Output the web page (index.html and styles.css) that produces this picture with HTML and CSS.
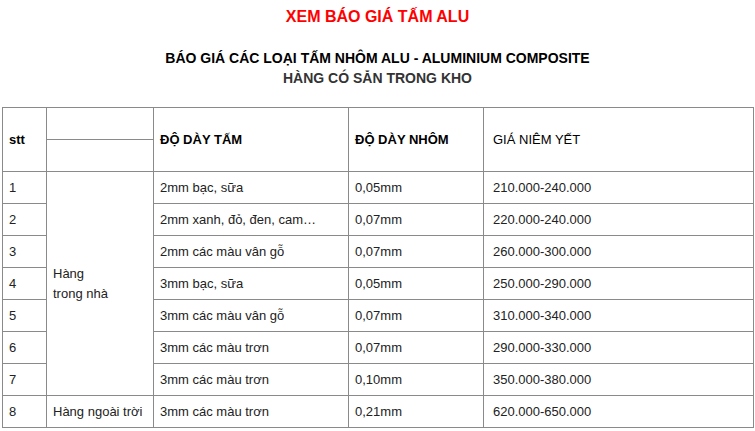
FILE: index.html
```html
<!DOCTYPE html>
<html lang="vi">
<head>
<meta charset="utf-8">
<title>Báo giá tấm Alu</title>
<link rel="stylesheet" href="styles.css">
</head>
<body>
<div class="page">
  <h1 class="title">XEM BÁO GIÁ TẤM ALU</h1>
  <div class="subtitle">
    <div class="sub-main">BÁO GIÁ CÁC LOẠI TẤM NHÔM ALU - ALUMINIUM COMPOSITE</div>
    <div class="sub-second">HÀNG CÓ SẴN TRONG KHO</div>
  </div>
  <table class="price">
    <colgroup>
      <col class="c1"><col class="c2"><col class="c3"><col class="c4"><col class="c5">
    </colgroup>
    <thead>
      <tr class="hrow">
        <th rowspan="2" class="b">stt</th>
        <th class="empty"></th>
        <th rowspan="2" class="b">ĐỘ DÀY TẤM</th>
        <th rowspan="2" class="b">ĐỘ DÀY NHÔM</th>
        <th rowspan="2" class="r price-col">GIÁ NIÊM YẾT</th>
      </tr>
      <tr class="hrow">
        <th class="empty"></th>
      </tr>
    </thead>
    <tbody>
      <tr><td>1</td><td rowspan="7" class="group">Hàng<br>trong nhà</td><td>2mm bạc, sữa</td><td>0,05mm</td><td class="price-col">210.000-240.000</td></tr>
      <tr><td>2</td><td>2mm xanh, đỏ, đen, cam…</td><td>0,07mm</td><td class="price-col">220.000-240.000</td></tr>
      <tr><td>3</td><td>2mm các màu vân gỗ</td><td>0,07mm</td><td class="price-col">260.000-300.000</td></tr>
      <tr><td>4</td><td>3mm bạc, sữa</td><td>0,05mm</td><td class="price-col">250.000-290.000</td></tr>
      <tr><td>5</td><td>3mm các màu vân gỗ</td><td>0,07mm</td><td class="price-col">310.000-340.000</td></tr>
      <tr><td>6</td><td>3mm các màu trơn</td><td>0,07mm</td><td class="price-col">290.000-330.000</td></tr>
      <tr><td>7</td><td>3mm các màu trơn</td><td>0,10mm</td><td class="price-col">350.000-380.000</td></tr>
      <tr><td>8</td><td>Hàng ngoài trời</td><td>3mm các màu trơn</td><td>0,21mm</td><td class="price-col">620.000-650.000</td></tr>
    </tbody>
  </table>
</div>
</body>
</html>
```
FILE: styles.css
```css
html, body {
  margin: 0;
  padding: 0;
  background: #ffffff;
}
body {
  font-family: "Liberation Sans", Arial, sans-serif;
  color: #222;
  overflow: hidden;
}
.page {
  width: 755px;
}
.title {
  margin: 0;
  padding-top: 7px;
  font-size: 16px;
  line-height: 20px;
  font-weight: bold;
  color: #ff0000;
  text-align: center;
}
.subtitle {
  margin-top: 21px;
  text-align: center;
  font-size: 14px;
  line-height: 20px;
  font-weight: bold;
}
.sub-main {
  color: #000;
}
.sub-second {
  color: #333;
}
.price {
  margin: 19px 0 0 2px;
  width: 751px;
  border-collapse: collapse;
  table-layout: fixed;
  border: 1px solid #333;
  font-size: 13px;
}
.c1 { width: 44px; }
.c2 { width: 107px; }
.c3 { width: 195px; }
.c4 { width: 135px; }
.c5 { width: 270px; }
.price th,
.price td {
  border: 1px solid #8a8a8a;
  padding: 0 6px;
  text-align: left;
  vertical-align: middle;
  line-height: 20px;
  color: #222;
}
.price thead th {
  color: #000;
}
.price th.b {
  font-weight: bold;
}
.price th.r {
  font-weight: normal;
}
.hrow {
  height: 32px;
}
.price tbody tr {
  height: 32px;
}
.price td {
  height: 31px;
}
.price .price-col {
  padding-left: 9px;
}
.price tr:first-child th:first-child,
.price tbody td:first-child {
  padding-left: 6px;
}
```
